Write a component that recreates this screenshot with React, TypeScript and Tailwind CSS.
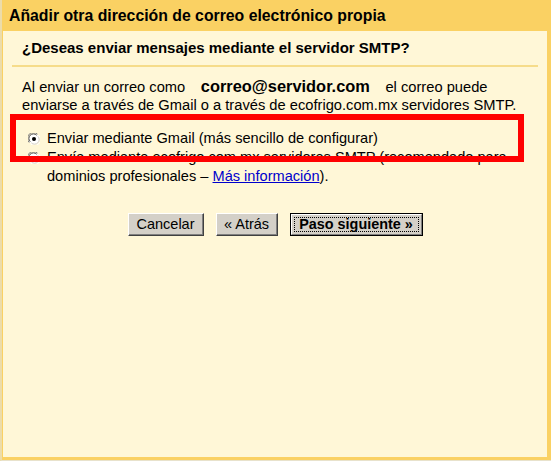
import React from 'react';

function Radio({ checked }: { checked?: boolean }) {
  return (
    <svg width="12" height="12" viewBox="0 0 12 12" className="shrink-0">
      <circle cx="6" cy="6" r="5.5" fill="#ffffff" />
      <path d="M1.2 9.5 A5.5 5.5 0 0 1 9.5 1.2" fill="none" stroke="#808080" strokeWidth="1" />
      <path d="M2.2 8.7 A4.3 4.3 0 0 1 8.7 2.2" fill="none" stroke="#404040" strokeWidth="1" />
      <path d="M10.8 2.5 A5.5 5.5 0 0 1 2.5 10.8" fill="none" stroke="#ffffff" strokeWidth="1" />
      <path d="M9.8 3.3 A4.3 4.3 0 0 1 3.3 9.8" fill="none" stroke="#d4d0c8" strokeWidth="1" />
      {checked && <circle cx="6" cy="6" r="2" fill="#000000" />}
    </svg>
  );
}

function Button({ children, w }: { children: React.ReactNode; w: string }) {
  return (
    <button
      className={`${w} h-[23px] bg-[#d4d0c8] text-[14.5px] text-black border border-t-white border-l-white border-b-[#404040] border-r-[#404040] shadow-[inset_-1px_-1px_#808080] flex items-center justify-center`}
    >
      {children}
    </button>
  );
}

export default function App() {
  return (
    <div
      className="w-[551px] h-[461px] bg-[#fad163] border-l-2 border-l-[#ecdcaa] border-b border-b-[#e8e2cc] flex flex-col text-black"
      style={{ fontFamily: '"Liberation Sans", Arial, sans-serif' }}
    >
      <div className="h-[31px] flex items-center pl-[7px] text-[15.8px] font-bold">
        Añadir otra dirección de correo electrónico propia
      </div>
      <div className="relative flex-1 ml-[1px] mr-[4px] mb-[3px] bg-[#fff7d7]">
        <div className="pt-[8px] pl-[19px] text-[15px] font-bold leading-[18px]">
          ¿Deseas enviar mensajes mediante el servidor SMTP?
        </div>
        <div className="mt-[8px] mx-[9px] h-[2px] bg-[#f6dc8a]" />
        <p className="mt-[10px] pl-[19px] text-[14.7px] leading-[18px]">
          Al enviar un correo como
          <span className="mx-[11px] text-[16.4px] font-bold"> correo@servidor.com </span>
          el correo puede
          <br />
          enviarse a través de Gmail o a través de ecofrigo.com.mx servidores SMTP.
        </p>
        <div className="mt-[15px] pl-[25px] text-[14.6px] leading-[19px]">
          <div className="flex items-center gap-[7px]">
            <Radio checked />
            <span>Enviar mediante Gmail (más sencillo de configurar)</span>
          </div>
          <div className="flex items-center gap-[7px]">
            <Radio />
            <span>Envía mediante ecofrigo.com.mx servidores SMTP (recomendado para</span>
          </div>
          <div className="pl-[19px]">
            dominios profesionales –{' '}
            <a href="#" className="text-[#0000cc] underline">
              Más información
            </a>
            ).
          </div>
        </div>
        <div className="mt-[27px] flex justify-center gap-[12px]">
          <Button w="w-[76px]">Cancelar</Button>
          <Button w="w-[62px]">« Atrás</Button>
          <button className="w-[133px] h-[23px] border border-black bg-[#d4d0c8] p-0">
            <span className="flex h-full w-full items-center justify-center border border-t-white border-l-white border-b-[#808080] border-r-[#808080] p-[2px]">
              <span className="flex h-full w-full items-center justify-center border border-dotted border-black text-[14.4px] font-bold">
                Paso siguiente »
              </span>
            </span>
          </button>
        </div>
        <div className="absolute left-[7px] top-[83px] w-[514px] h-[48px] border-[6px] border-[#ff0000]" />
      </div>
    </div>
  );
}
